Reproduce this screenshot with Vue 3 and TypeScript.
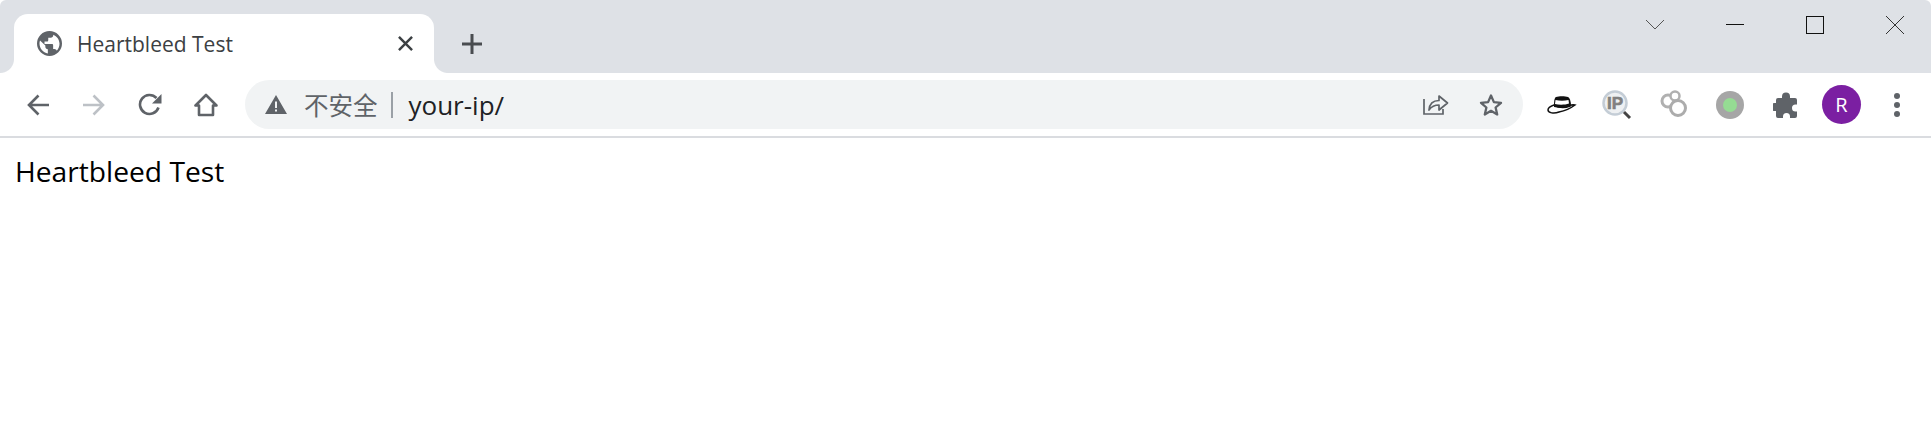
<script setup lang="ts">
const tabTitle = 'Heartbleed Test';
const pageUrl = 'your-ip/';
</script>

<template>
  <div class="browser">
    <div class="tabstrip">
      <div class="tab">
        <svg class="favicon" viewBox="0 0 24 24">
          <path fill="#5f6368" fill-rule="evenodd" d="M12 0a12 12 0 1 0 0 24a12 12 0 0 0 0-24zM2.400 12c0-1 .2-2 .5-2.900L8 14v1.200c0 1.300 1.100 2.400 2.400 2.400v3.900C5.900 20.800 2.400 16.800 2.400 12zM19 19c-.3-1-1.200-1.700-2.300-1.700h-1.200v-3.600c0-.7-.5-1.200-1.200-1.200H7.200V10h2.400c.7 0 1.200-.5 1.200-1.200V6.400h2.400c1.300 0 2.400-1.100 2.400-2.400v-.5c3.500 1.400 6 4.800 6 8.800c0 2.500-1 4.900-2.600 6.700z" />
        </svg>
        <span class="tab-title">{{ tabTitle }}</span>
        <svg class="tab-close" viewBox="0 0 16 16">
          <path d="M1 1l14 14M15 1L1 15" stroke="#3c4043" stroke-width="2.600" fill="none" />
        </svg>
      </div>
      <svg class="new-tab" viewBox="0 0 20 20">
        <path d="M10 0v20M0 10h20" stroke="#494c50" stroke-width="3" fill="none" />
      </svg>
      <div class="window-controls">
        <svg class="win-btn" viewBox="0 0 18 18">
          <path d="M0 4l9 9l9-9" stroke="#555" stroke-width="1" fill="none" />
        </svg>
        <svg class="win-btn" viewBox="0 0 18 18">
          <path d="M0 8.500h18" stroke="#111" stroke-width="1" fill="none" />
        </svg>
        <svg class="win-btn" viewBox="0 0 18 18">
          <rect x=".5" y=".5" width="17" height="17" stroke="#111" stroke-width="1" fill="none" />
        </svg>
        <svg class="win-btn" viewBox="0 0 18 18">
          <path d="M0 0l18 18M18 0L0 18" stroke="#333" stroke-width="1" fill="none" />
        </svg>
      </div>
    </div>

    <div class="toolbar">
      <div class="nav-btn">
        <svg viewBox="0 0 24 24" width="24" height="24">
          <path d="M23 12H3M12.500 2.500L3 12l9.500 9.500" stroke="#5f6368" stroke-width="2.600" fill="none" />
        </svg>
      </div>
      <div class="nav-btn">
        <svg viewBox="0 0 24 24" width="24" height="24">
          <path d="M1 12h20M11.500 2.500L21 12l-9.500 9.500" stroke="#bdc1c6" stroke-width="2.600" fill="none" />
        </svg>
      </div>
      <div class="nav-btn">
        <svg viewBox="0 0 24 24" width="24" height="24">
          <path d="M20.500 14.500A9.500 9.500 0 1 1 18.500 5" stroke="#5f6368" stroke-width="2.600" fill="none" />
          <path d="M23.500 1v9.500H14z" fill="#5f6368" />
        </svg>
      </div>
      <div class="nav-btn">
        <svg viewBox="0 0 24 24" width="24" height="24">
          <path d="M12 2L1.500 12.500H5V22h14v-9.500h3.500z" stroke="#5f6368" stroke-width="2.600" stroke-linejoin="round" fill="none" />
        </svg>
      </div>

      <div class="omnibox">
        <svg class="warning" viewBox="0 0 22 19">
          <path fill="#5f6368" fill-rule="evenodd" d="M11 0L22 19H0zM10 6.500v6.500h2V6.500zM10 14.500v2h2v-2z" />
        </svg>
        <span class="not-secure">不安全</span>
        <span class="separator"></span>
        <span class="url">{{ pageUrl }}</span>
        <svg class="share" viewBox="0 0 26 24">
          <path d="M1 8v15h19v-5" stroke="#5f6368" stroke-width="1.700" fill="none" />
          <path d="M6 19c.5-6 4-9.500 10-9.500V5l8.500 7l-8.500 7v-5c-4 0-7.500 1.500-10 5z" stroke="#5f6368" stroke-width="1.700" stroke-linejoin="round" fill="none" />
        </svg>
        <svg class="star" viewBox="0 0 24 24">
          <path d="M12 2.500l2.900 6.600l7.100.7l-5.400 4.700l1.600 7l-6.200-3.700l-6.200 3.700l1.600-7L2 9.800l7.100-.7z" stroke="#5f6368" stroke-width="2.300" stroke-linejoin="round" fill="none" />
        </svg>
      </div>

      <div class="actions">
        <svg class="ext hat" viewBox="0 0 30 30">
          <path d="M7 15c-3 1-6 3-6 5c0 3 6 4 11 2c5-1 12-4 16-7c-2-.5-4 0-5 1c-5 2-11 2-16-1z" stroke="#111" stroke-width="1.500" fill="#fff" />
          <path d="M7 17c0-4 0-9 2-10c3-1 9-1 12 0c2 1 3 5 3 9c-5 2-12 2-17 1z" fill="#111" />
          <path d="M8.500 10c4 1 9 1 13 0l.5 3.500c-4 1.500-10 1.500-14 .5z" fill="#fff" />
        </svg>
        <svg class="ext ip" viewBox="0 0 30 30">
          <circle cx="13" cy="13" r="11.500" fill="#eef0f2" stroke="#c4cdd6" stroke-width="2.500" />
          <text x="13" y="19" class="ip-text">IP</text>
          <path d="M22 22l6 6" stroke="#444" stroke-width="3" />
        </svg>
        <svg class="ext" viewBox="0 0 30 30">
          <circle cx="9" cy="11" r="6" fill="#fff" stroke="#b0b0b0" stroke-width="3" />
          <circle cx="16" cy="6" r="4.500" fill="#fff" stroke="#b0b0b0" stroke-width="2.500" />
          <circle cx="19" cy="18" r="7.500" fill="#fff" stroke="#acacac" stroke-width="3" />
        </svg>
        <svg class="ext green" viewBox="0 0 30 30">
          <circle cx="15" cy="15" r="14" fill="#a6a6a6" />
          <circle cx="15" cy="15" r="7" fill="#95dc93" />
        </svg>
        <svg class="ext puzzle" viewBox="0 0 26 26">
          <path fill="#5f6368" d="M9 4.500a4 4 0 0 1 8 0V6h5a2 2 0 0 1 2 2v4.500h-1.500a3.500 3.500 0 0 0 0 7H24V24a2 2 0 0 1-2 2h-5v-1.500a3.500 3.500 0 0 0-7 0V26H5a2 2 0 0 1-2-2v-5H1.500a4 4 0 0 1 0-8H3V8a2 2 0 0 1 2-2h4z" />
        </svg>
        <div class="avatar">R</div>
        <div class="menu-dots">
          <span></span>
          <span></span>
          <span></span>
        </div>
      </div>
    </div>

    <div class="page">Heartbleed Test</div>
  </div>
</template>

<style scoped>
.browser {
  min-height: 100vh;
  background: #fff;
  display: flex;
  flex-direction: column;
}

.tabstrip {
  height: 73px;
  box-sizing: border-box;
  padding: 14px 0 0 14px;
  background: #dee1e6;
  border-radius: 6px 6px 0 0;
  display: flex;
  align-items: flex-start;
}

.tab {
  position: relative;
  width: 420px;
  height: 59px;
  box-sizing: border-box;
  padding: 0 21px 0 23px;
  background: #fff;
  border-radius: 14px 14px 0 0;
  display: flex;
  align-items: center;
  color: #3c4043;
}

.tab::before,
.tab::after {
  content: '';
  position: absolute;
  bottom: 0;
  width: 14px;
  height: 14px;
}

.tab::before {
  left: -14px;
  background: radial-gradient(circle at 0 0, #dee1e6 13.500px, #fff 14.500px);
}

.tab::after {
  right: -14px;
  background: radial-gradient(circle at 100% 0, #dee1e6 13.500px, #fff 14.500px);
}

.favicon {
  width: 25px;
  height: 25px;
  flex: none;
}

.tab-title {
  margin-left: 15px;
  flex: 1;
  font-family: "Open Sans", sans-serif;
  font-size: 21px;
}

.tab-close {
  width: 15px;
  height: 15px;
  flex: none;
}

.new-tab {
  width: 20px;
  height: 20px;
  margin: 20px 0 0 28px;
  flex: none;
}

.window-controls {
  margin-left: auto;
  margin-right: 27px;
  padding-top: 2px;
  display: flex;
  gap: 62px;
}

.win-btn {
  width: 18px;
  height: 18px;
  display: block;
}

.toolbar {
  height: 65px;
  box-sizing: border-box;
  padding: 0 31px 0 10px;
  background: #fff;
  border-bottom: 2px solid #dadce0;
  display: flex;
  align-items: center;
}

.nav-btn {
  width: 56px;
  display: flex;
  justify-content: center;
  flex: none;
}

.omnibox {
  flex: 1;
  height: 49px;
  margin-left: 11px;
  padding: 0 20px 0 20px;
  background: #f1f3f4;
  border-radius: 25px;
  display: flex;
  align-items: center;
  box-sizing: border-box;
}

.warning {
  width: 22px;
  height: 19px;
  flex: none;
}

.not-secure {
  margin-left: 17px;
  font-family: "Noto Sans CJK SC", sans-serif;
  font-size: 24.500px;
  color: #5f6368;
}

.separator {
  width: 2px;
  height: 26px;
  margin: 0 16px 0 13px;
  background: #9aa0a6;
}

.url {
  flex: 1;
  font-family: "Open Sans", sans-serif;
  font-size: 26px;
  color: #202124;
}

.share {
  width: 26px;
  height: 24px;
  margin-bottom: 3px;
  flex: none;
}

.star {
  width: 24px;
  height: 24px;
  margin-left: 30px;
  flex: none;
}

.actions {
  margin-left: 24px;
  display: flex;
  align-items: center;
}

.ext {
  width: 30px;
  height: 30px;
  margin-left: 27px;
  flex: none;
}

.hat {
  margin-left: 0;
}

.ip {
  margin-left: 25px;
}

.green {
  margin-left: 26px;
}

.ip-text {
  font-family: "Liberation Sans", sans-serif;
  font-size: 17px;
  font-weight: 700;
  fill: #808080;
  stroke: #808080;
  stroke-width: 0.6px;
  text-anchor: middle;
}

.puzzle {
  width: 26px;
  height: 26px;
  margin-left: 28px;
}

.avatar {
  width: 39px;
  height: 39px;
  margin-left: 23px;
  border-radius: 50%;
  background: #7b1fa2;
  color: #fff;
  font-family: "Open Sans", sans-serif;
  font-size: 20px;
  display: flex;
  align-items: center;
  justify-content: center;
  flex: none;
}

.menu-dots {
  margin-left: 33px;
  display: flex;
  flex-direction: column;
  gap: 3px;
}

.menu-dots span {
  width: 6px;
  height: 6px;
  border-radius: 50%;
  background: #5f6368;
}

.page {
  padding: 14px 0 0 15px;
  font-family: "Open Sans", sans-serif;
  font-size: 28.200px;
  color: #000;
}
</style>

<style>
html,
body {
  margin: 0;
  background: #fff;
}
</style>
